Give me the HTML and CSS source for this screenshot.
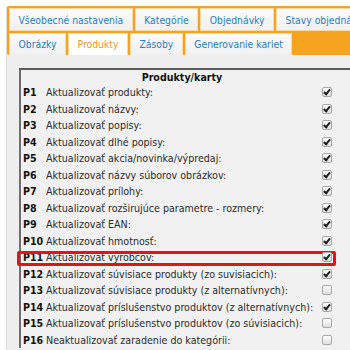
FILE: index.html
```html
<!DOCTYPE html>
<html lang="sk">
<head>
  <meta charset="UTF-8">
  <title>Nastavenia - Produkty</title>
  <link rel="stylesheet" href="styles.css">
</head>
<body>
  <div class="panel">
    <div class="tabs">
      <div class="tab-row">
        <a class="tab" href="#">Všeobecné nastavenia</a>
        <a class="tab" href="#">Kategórie</a>
        <a class="tab" href="#">Objednávky</a>
        <a class="tab" href="#">Stavy objednávok</a>
      </div>
      <div class="tab-row">
        <a class="tab" href="#">Obrázky</a>
        <a class="tab active" href="#">Produkty</a>
        <a class="tab" href="#">Zásoby</a>
        <a class="tab" href="#">Generovanie kariet</a>
      </div>
    </div>

    <div class="content">
      <table class="settings">
        <tr>
          <th colspan="3">Produkty/karty</th>
        </tr>
        <tr><td class="code">P1</td><td>Aktualizovať produkty:</td><td class="chk"><span class="cb on"></span></td></tr>
        <tr><td class="code">P2</td><td>Aktualizovať názvy:</td><td class="chk"><span class="cb on"></span></td></tr>
        <tr><td class="code">P3</td><td>Aktualizovať popisy:</td><td class="chk"><span class="cb on"></span></td></tr>
        <tr><td class="code">P4</td><td>Aktualizovať dlhé popisy:</td><td class="chk"><span class="cb on"></span></td></tr>
        <tr><td class="code">P5</td><td>Aktualizovať akcia/novinka/výpredaj:</td><td class="chk"><span class="cb on"></span></td></tr>
        <tr><td class="code">P6</td><td>Aktualizovať názvy súborov obrázkov:</td><td class="chk"><span class="cb on"></span></td></tr>
        <tr><td class="code">P7</td><td>Aktualizovať prílohy:</td><td class="chk"><span class="cb on"></span></td></tr>
        <tr><td class="code">P8</td><td>Aktualizovať rozširujúce parametre - rozmery:</td><td class="chk"><span class="cb on"></span></td></tr>
        <tr><td class="code">P9</td><td>Aktualizovať EAN:</td><td class="chk"><span class="cb on"></span></td></tr>
        <tr><td class="code">P10</td><td>Aktualizovať hmotnosť:</td><td class="chk"><span class="cb on"></span></td></tr>
        <tr><td class="code"><span class="highlight"></span>P11</td><td>Aktualizovať výrobcov:</td><td class="chk"><span class="cb on"></span></td></tr>
        <tr><td class="code">P12</td><td>Aktualizovať súvisiace produkty (zo suvisiacich):</td><td class="chk"><span class="cb on"></span></td></tr>
        <tr><td class="code">P13</td><td>Aktualizovať súvisiace produkty (z alternatívnych):</td><td class="chk"><span class="cb"></span></td></tr>
        <tr><td class="code">P14</td><td>Aktualizovať príslušenstvo produktov (z alternatívnych):</td><td class="chk"><span class="cb on"></span></td></tr>
        <tr><td class="code">P15</td><td>Aktualizovať príslušenstvo produktov (zo súvisiacich):</td><td class="chk"><span class="cb"></span></td></tr>
        <tr><td class="code">P16</td><td>Neaktualizovať zaradenie do kategórii:</td><td class="chk"><span class="cb"></span></td></tr>
      </table>
    </div>
  </div>
</body>
</html>
```
FILE: styles.css
```css
body {
  margin: 0;
  background-color: #fff;
  font-family: "DejaVu Sans Condensed", "DejaVu Sans", sans-serif;
  font-stretch: condensed;
  overflow: hidden;
}

.panel {
  margin: 6px 0 0 6px;
  background-color: #eeeeee;
  border-left: 1px solid #dcdcdc;
  height: 344px;
  overflow: hidden;
}

/* Lista zaloziek */
.tabs {
  background-color: #f6a31f;
  border-radius: 4px 0 0 4px;
  margin-left: -1px;
  padding: 2px 0 0 3px;
  display: flex;
  flex-direction: column;
  gap: 2px;
  overflow: hidden;
}

.tab-row {
  display: flex;
  gap: 2px;
}

.tab {
  display: block;
  height: 23px;
  line-height: 22px;
  padding: 0 8.5px;
  font-size: 10.3px;
  color: #2a7dbd;
  text-decoration: none;
  white-space: nowrap;
  background: linear-gradient(#fbfbfb, #f0f0f0);
  box-sizing: border-box;
  border: 1px solid #f9d9a6;
}

.tab-row + .tab-row .tab {
  height: 22px;
  line-height: 21px;
  border-bottom: none;
}

.tab.active {
  background: #fff;
  color: #f39a18;
}

/* Obsah */
.content {
  padding: 13px 0 0 12px;
}

.settings {
  border-collapse: collapse;
  width: 332px;
  border-top: 2px solid #5a5a5a;
  border-left: 2px solid #6e6e6e;
  background-color: #f1f1f1;
  font-size: 10.6px;
  color: #2b2b2b;
}

.settings th {
  height: 14px;
  padding: 0 8px 0 0;
  font-weight: bold;
  color: #111;
  text-align: center;
}

.settings td {
  height: 16.5px;
  padding: 0;
  white-space: nowrap;
}

.settings td.code {
  position: relative;
  width: 23px;
  padding-left: 2px;
  font-weight: bold;
  color: #111;
}

.settings td.chk {
  width: 29px;
}

/* Cerveny ramik okolo P11 */
.highlight {
  position: absolute;
  left: -4px;
  top: 2px;
  width: 319px;
  height: 15px;
  box-sizing: border-box;
  border: 3px solid #e8111a;
  border-radius: 2px;
}

.cb {
  display: block;
  position: relative;
  width: 8px;
  height: 8px;
  border: 1px solid #a9a9a9;
  border-radius: 2px;
  background: linear-gradient(#fdfdfd, #dedede);
}

.cb.on::after {
  content: "";
  position: absolute;
  left: 2px;
  top: 0;
  width: 2px;
  height: 5px;
  border: solid #1e1e1e;
  border-width: 0 2px 2px 0;
  transform: rotate(40deg);
}
```
